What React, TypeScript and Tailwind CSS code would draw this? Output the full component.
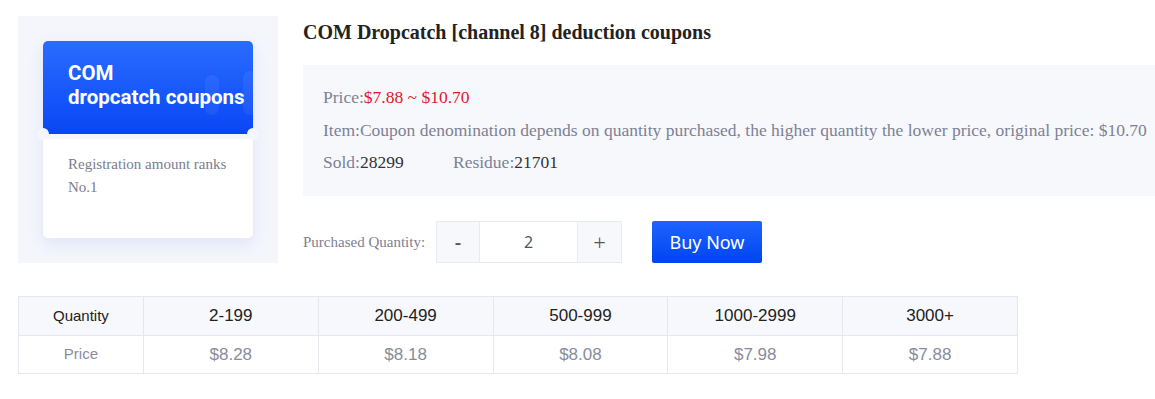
const serif = "font-['Liberation_Serif','Times_New_Roman',serif]";
const sans = "font-['Liberation_Sans',Arial,sans-serif]";

const tiers = [
	{ range: "2-199", price: "$8.28" },
	{ range: "200-499", price: "$8.18" },
	{ range: "500-999", price: "$8.08" },
	{ range: "1000-2999", price: "$7.98" },
	{ range: "3000+", price: "$7.88" },
];

function CouponCard() {
	return (
		<div className="w-[260px] h-[247px] bg-[#f4f6fc] pt-[25px] pl-[25px]">
			<div className="relative w-[210px] h-[197px] rounded-[5px] shadow-[0_6px_16px_rgba(60,80,200,0.10)]">
				<div className="relative h-[93px] rounded-t-[5px] bg-gradient-to-b from-[#2a6cff] to-[#0a45f5] pl-[25px] pt-[20px] overflow-hidden">
					<div className="absolute right-[34px] top-[34px] w-[14px] h-[40px] rounded-full bg-white/[0.06]" />
					<div className="absolute right-[-4px] top-[30px] w-[14px] h-[44px] rounded-full bg-white/[0.06]" />
					<div className="font-['Roboto',sans-serif] font-bold text-white text-[20.5px] leading-[24px]">
						<div>COM</div>
						<div>dropcatch coupons</div>
					</div>
				</div>
				<div className="absolute left-[-6px] top-[87px] w-[12px] h-[12px] rounded-full bg-[#f4f6fc]" />
				<div className="absolute right-[-6px] top-[87px] w-[12px] h-[12px] rounded-full bg-[#f4f6fc]" />
				<div className={`mt-[5px] h-[99px] rounded-b-[5px] bg-white px-[25px] pt-[14px] text-[15px] leading-[23px] text-[#7a7d8c] ${serif}`}>
					Registration amount ranks No.1
				</div>
			</div>
		</div>
	);
}

export default function App() {
	return (
		<div className="w-[1155px] h-[399px] bg-white pt-[16px] pl-[18px]">
			<div className="flex gap-[25px]">
				<CouponCard />
				<div className="flex-1">
					<h1 className={`${serif} font-bold text-[20px] leading-[32px] text-[#222]`}>
						COM Dropcatch [channel 8] deduction coupons
					</h1>
					<div className={`mt-[17px] h-[131px] bg-[#f7f8fc] pl-[20px] pt-[20px] text-[17.5px] text-[#7d8195] ${serif}`}>
						<div className="leading-[24px]">
							Price:<span className="text-[#e0162b]">$7.88 ~ $10.70</span>
						</div>
						<div className="leading-[24px] mt-[9px] whitespace-nowrap">
							Item:Coupon denomination depends on quantity purchased, the higher quantity the lower price, original price: $10.70
						</div>
						<div className="leading-[24px] mt-[8px] flex">
							<span className="w-[130px]">Sold:<span className="text-[#333]">28299</span></span>
							<span>Residue:<span className="text-[#333]">21701</span></span>
						</div>
					</div>
					<div className="mt-[25px] flex items-center">
						<span className={`${serif} text-[15px] text-[#7d8195] w-[133px] whitespace-nowrap`}>Purchased Quantity:</span>
						<div className="flex h-[42px] border border-[#e8eaf2] font-['Noto_Sans',sans-serif] text-[#555] text-[16px]">
							<div className="w-[42px] bg-[#f7f8fc] flex items-center justify-center text-[20px] font-medium">-</div>
							<div className="w-[99px] bg-white border-x border-[#e8eaf2] flex items-center justify-center">2</div>
							<div className="w-[43px] bg-[#f7f8fc] flex items-center justify-center text-[22px] font-light">+</div>
						</div>
						<button className="ml-[30px] w-[110px] h-[42px] rounded-[2px] bg-gradient-to-b from-[#1e63ff] to-[#0044f0] text-white text-[18px] font-['Noto_Sans',sans-serif]">
							Buy Now
						</button>
					</div>
				</div>
			</div>
			<table className={`mt-[33px] w-[1000px] border-collapse ${sans}`}>
				<tbody>
					<tr className="h-[39px] bg-[#f7f8fc]">
						<td className="w-[125px] border border-[#e5e7ef] text-center text-[15px] text-[#222]">Quantity</td>
						{tiers.map((t) => (
							<td key={t.range} className="w-[175px] border border-[#e5e7ef] text-center text-[17px] text-[#222]">
								{t.range}
							</td>
						))}
					</tr>
					<tr className="h-[38px] bg-white">
						<td className="border border-[#e5e7ef] text-center text-[15px] text-[#888c9a]">Price</td>
						{tiers.map((t) => (
							<td key={t.price} className="border border-[#e5e7ef] text-center text-[17px] text-[#888c9a]">
								{t.price}
							</td>
						))}
					</tr>
				</tbody>
			</table>
		</div>
	);
}
